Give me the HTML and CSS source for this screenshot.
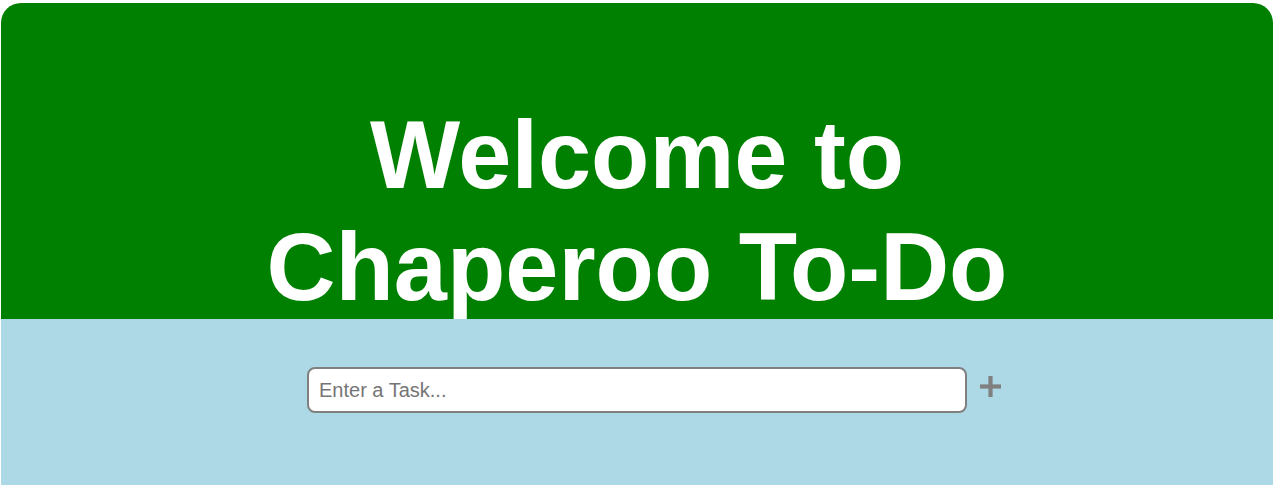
FILE: index.html
```html
<!DOCTYPE html>
<html lang="en">
<head>
<meta charset="utf-8">
<title>Chaperoo To-Do</title>
<link rel="stylesheet" href="styles.css">
</head>
<body>
  <div class="app">
    <header class="hero">
      <h1 class="title">Welcome to Chaperoo To-Do</h1>
    </header>
    <main class="panel">
      <form class="task-form" onsubmit="return false;">
        <span class="spacer"></span>
        <input class="task-input" type="text" placeholder="Enter a Task...">
        <button class="add-btn" type="submit" aria-label="Add task">
          <svg width="21" height="21" viewBox="0 0 21 21">
            <rect x="0" y="8.4" width="21" height="4.2" fill="#808080"/>
            <rect x="8.4" y="0" width="4.2" height="21" fill="#808080"/>
          </svg>
        </button>
      </form>
    </main>
  </div>
</body>
</html>
```
FILE: styles.css
```css
html, body {
  margin: 0;
  padding: 0;
  background: #ffffff;
}

body {
  font-family: "Liberation Sans", Arial, sans-serif;
}

.app {
  margin: 3px 2px 0 1px;
  height: 482px;
  display: flex;
  flex-direction: column;
  border-radius: 20px 20px 0 0;
  overflow: hidden;
}

.hero {
  background: #008000;
  height: 316px;
  display: flex;
  justify-content: center;
  align-items: flex-end;
}

.title {
  margin: 0 0 -4px 0;
  width: 800px;
  text-align: center;
  color: #ffffff;
  font-size: 95.5px;
  font-weight: bold;
  line-height: 112px;
}

.panel {
  flex: 1;
  background: #add8e6;
  padding-top: 48px;
}

.task-form {
  display: grid;
  grid-template-columns: 1fr 660px 1fr;
  align-items: start;
}

.task-input {
  box-sizing: border-box;
  width: 660px;
  height: 46px;
  border: 2px solid #808080;
  border-radius: 8px;
  padding: 0 10px;
  font-family: "Liberation Sans", Arial, sans-serif;
  font-size: 20px;
  background: #ffffff;
  outline: none;
}

.task-input::placeholder {
  color: #757575;
}

.add-btn {
  justify-self: start;
  margin: 9px 0 0 13px;
  padding: 0;
  border: none;
  background: transparent;
  width: 21px;
  height: 21px;
  cursor: pointer;
  display: block;
}

.add-btn svg {
  display: block;
}
```
